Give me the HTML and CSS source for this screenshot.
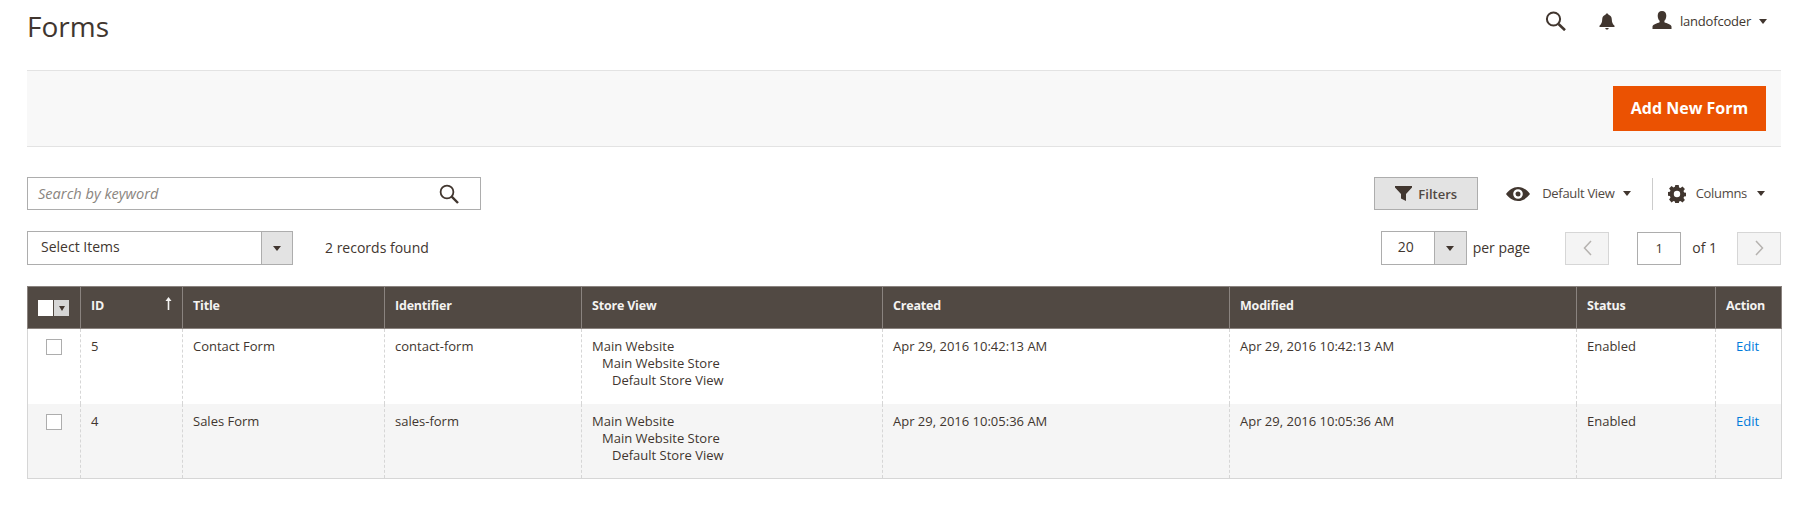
FILE: index.html

```html
<!DOCTYPE html>
<html lang="en">
<head>
  <meta charset="UTF-8" />
  <meta name="viewport" content="width=device-width, initial-scale=1.0"/>
  <title>Forms</title>
  <link rel="stylesheet" href="styles.css">
</head>
<body>
<div class="page">
  <header class="page-header">
    <h1>Forms</h1>
    <div class="header-actions">
      <svg class="icon-search-top" viewBox="0 0 22 20" aria-hidden="true"><circle cx="8.5" cy="8" r="6.6" fill="none" stroke="#41362f" stroke-width="2"/><path d="M13.5 13l6.5 6.2" stroke="#41362f" stroke-width="2.6" fill="none"/></svg>
      <svg class="icon-bell" viewBox="0 0 16 17" aria-hidden="true"><path d="M8 0.5c.9 0 1.4.6 1.5 1.3 2.3.6 3.2 2.5 3.3 4.7.1 2.8.8 4.500 2.700 6.300v1.200H.5v-1.200c1.900-1.800 2.600-3.500 2.700-6.300.1-2.200 1-4.100 3.300-4.700C6.600 1.100 7.100.5 8 .5zM6.300 15h3.400c-.1 1-.8 1.600-1.700 1.600S6.400 16 6.300 15z" fill="#41362f"/></svg>
      <div class="user-menu">
        <svg class="icon-user" viewBox="0 0 20 18" aria-hidden="true"><path d="M10 0c2.800 0 4.300 2 4.300 4.700 0 2.100-.8 4-1.900 5.100v1.400c2.300 1.100 6.700 2 7.100 4.300V18H.5v-2.500c.4-2.300 4.800-3.200 7.100-4.300V9.800C6.500 8.700 5.700 6.800 5.700 4.700 5.700 2 7.200 0 10 0z" fill="#41362f"/></svg>
        <span>landofcoder</span>
        <i class="caret"></i>
      </div>
    </div>
  </header>

  <div class="actions-bar">
    <button class="btn-primary">Add New Form</button>
  </div>

  <div class="toolbar-row toolbar-top">
    <div class="search-box">
      <span class="search-placeholder">Search by keyword</span>
      <svg class="icon-search" viewBox="0 0 20 20" aria-hidden="true"><circle cx="8" cy="8" r="6.400" fill="none" stroke="#41362f" stroke-width="1.800"/><path d="M12.700 12.700l6.300 6.300" stroke="#41362f" stroke-width="2.400" fill="none"/></svg>
    </div>
    <div class="toolbar-right">
      <button class="btn-filters">
        <svg class="icon-filter" viewBox="0 0 17 15" aria-hidden="true"><path d="M0 0h17v1.500l-6 6.500v7l-5-2.500V8L0 1.500z" fill="#41362f"/></svg>
        Filters
      </button>
      <div class="view-select">
        <svg class="icon-eye" viewBox="0 0 24 14" aria-hidden="true"><path fill-rule="evenodd" d="M12 0c5 0 9 3 12 7-3 4-7 7-12 7S3 11 0 7c3-4 7-7 12-7zm0 2.200a4.800 4.800 0 1 0 0 9.600 4.800 4.800 0 0 0 0-9.600zm0 2.300a2.500 2.500 0 1 1 0 5 2.500 2.500 0 0 1 0-5z" fill="#41362f"/></svg>
        <span>Default View</span>
        <i class="caret"></i>
      </div>
      <div class="columns-select">
        <svg class="icon-gear" viewBox="0 0 18 18" aria-hidden="true"><path fill-rule="evenodd" d="M7.300 0h3.400l.4 2.400 1.400.6 2-1.400 2.400 2.400-1.400 2 .6 1.400 2.400.4v3.400l-2.400.4-.6 1.400 1.400 2-2.400 2.400-2-1.400-1.400.6-.4 2.400H7.300l-.4-2.400-1.400-.6-2 1.400L1.100 14.400l1.400-2-.6-1.400L-.5 10.600V7.200l2.400-.4.6-1.400-1.400-2L3.500 1l2 1.400 1.400-.6zM9 5.800a3.200 3.200 0 1 0 0 6.400 3.200 3.200 0 0 0 0-6.400z" fill="#41362f"/></svg>
        <span>Columns</span>
        <i class="caret"></i>
      </div>
    </div>
  </div>

  <div class="toolbar-row toolbar-bottom">
    <div class="toolbar-left">
      <div class="select-box select-items">
        <span class="select-value">Select Items</span>
        <span class="select-arrow"><i class="caret"></i></span>
      </div>
      <span class="records">2 records found</span>
    </div>
    <div class="pager">
      <div class="select-box select-page">
        <span class="select-value">20</span>
        <span class="select-arrow"><i class="caret"></i></span>
      </div>
      <span class="per-page">per page</span>
      <button class="page-btn" aria-label="Previous"><svg viewBox="0 0 9 16" aria-hidden="true"><path d="M8 1L1.500 8 8 15" fill="none" stroke="#b5b2af" stroke-width="1.500"/></svg></button>
      <span class="page-input">1</span>
      <span class="page-total">of 1</span>
      <button class="page-btn" aria-label="Next"><svg viewBox="0 0 9 16" aria-hidden="true"><path d="M1 1l6.500 7L1 15" fill="none" stroke="#b5b2af" stroke-width="1.500"/></svg></button>
    </div>
  </div>

  <table class="grid">
    <colgroup>
      <col class="col-check"><col class="col-id"><col class="col-title"><col class="col-ident">
      <col class="col-store"><col class="col-date"><col class="col-date"><col class="col-status"><col class="col-action">
    </colgroup>
    <thead>
      <tr>
        <th class="check-head"><span class="head-check"><b></b><span><i class="caret"></i></span></span></th>
        <th><span class="sort-head">ID<svg class="icon-sort" viewBox="0 0 7 13" aria-hidden="true"><path d="M3.500 0L6.500 4H4.300v9H2.700V4H.5z" fill="#f4f3f2"/></svg></span></th>
        <th>Title</th>
        <th>Identifier</th>
        <th>Store View</th>
        <th>Created</th>
        <th>Modified</th>
        <th>Status</th>
        <th>Action</th>
      </tr>
    </thead>
    <tbody>
      <tr>
        <td class="check-cell"><span class="row-check"></span></td>
        <td>5</td>
        <td>Contact Form</td>
        <td>contact-form</td>
        <td class="store-cell">Main Website<span class="store-1">Main Website Store</span><span class="store-2">Default Store View</span></td>
        <td>Apr 29, 2016 10:42:13 AM</td>
        <td>Apr 29, 2016 10:42:13 AM</td>
        <td>Enabled</td>
        <td><a href="#">Edit</a></td>
      </tr>
      <tr class="even">
        <td class="check-cell"><span class="row-check"></span></td>
        <td>4</td>
        <td>Sales Form</td>
        <td>sales-form</td>
        <td class="store-cell">Main Website<span class="store-1">Main Website Store</span><span class="store-2">Default Store View</span></td>
        <td>Apr 29, 2016 10:05:36 AM</td>
        <td>Apr 29, 2016 10:05:36 AM</td>
        <td>Enabled</td>
        <td><a href="#">Edit</a></td>
      </tr>
    </tbody>
  </table>
</div>
</body>
</html>
```

FILE: styles.css

```css
* { box-sizing: border-box; }
body { margin: 0; background: #fff; color: #41362f; font-family: "Open Sans", sans-serif; font-size: 13px; }
.page { padding: 0 19px 0 27px; }

.caret {
  display: inline-block;
  width: 0; height: 0;
  border-left: 4px solid transparent;
  border-right: 4px solid transparent;
  border-top: 5px solid #41362f;
}

/* top header */
.page-header {
  height: 70px;
  display: flex;
  justify-content: space-between;
  align-items: flex-start;
}
h1 { margin: 6px 0 0; font-size: 28px; font-weight: 400; line-height: 40px; color: #41362f; }
.header-actions { display: flex; align-items: center; height: 42px; margin-right: 14px; }
.icon-search-top { width: 22px; height: 20px; margin-right: 32px; }
.icon-bell { width: 16px; height: 17px; margin-right: 37px; }
.user-menu { display: flex; align-items: center; font-size: 13px; }
.icon-user { width: 20px; height: 18px; margin-right: 8px; margin-top: -3px; }
.user-menu span { margin-top: -1px; letter-spacing: -0.2px; }
.user-menu .caret { margin-left: 8px; }

/* page actions */
.actions-bar {
  height: 77px;
  background: #f8f8f8;
  border-top: 1px solid #e3e3e3;
  border-bottom: 1px solid #e3e3e3;
  display: flex;
  justify-content: flex-end;
  align-items: center;
  padding-right: 15px;
}
.btn-primary {
  width: 153px; height: 45px;
  border: 0;
  padding: 0 0 2px;
  background: #eb5202;
  color: #fff;
  font: 700 16px "Open Sans", sans-serif;
}

/* toolbars */
.toolbar-row { display: flex; justify-content: space-between; align-items: center; }
.toolbar-top { margin-top: 30px; height: 33px; }
.toolbar-bottom { margin-top: 21px; height: 34px; }
.toolbar-left, .toolbar-right, .pager { display: flex; align-items: center; }

.search-box {
  width: 454px; height: 33px;
  border: 1px solid #adadad;
  display: flex;
  justify-content: space-between;
  align-items: center;
  padding: 0 21px 0 10px;
}
.search-placeholder { font-style: italic; color: #8a8580; font-size: 14.6px; margin-top: -1px; }
.icon-search { width: 20px; height: 20px; }

.btn-filters {
  width: 104px; height: 33px;
  margin-right: 28px;
  background: #e3e3e3;
  border: 1px solid #adadad;
  color: #514943;
  font: 600 13px "Open Sans", sans-serif;
  display: flex;
  align-items: center;
  justify-content: center;
  gap: 6px;
}
.icon-filter { width: 17px; height: 15px; }
.view-select, .columns-select { display: flex; align-items: center; color: #514943; letter-spacing: -0.3px; }
.view-select span, .columns-select span { margin-top: -2px; }
.view-select { padding-right: 21px; height: 32px; border-right: 1px solid #ccc; }
.icon-eye { width: 24px; height: 14px; margin-right: 12px; }
.view-select .caret { margin-left: 8px; }
.columns-select { padding-left: 15px; padding-right: 16px; }
.icon-gear { width: 18px; height: 18px; margin-right: 10px; }
.columns-select .caret { margin-left: 10px; }

.select-box { display: flex; height: 34px; border: 1px solid #adadad; background: #fff; }
.select-value { flex: 1; padding-left: 13px; line-height: 30px; font-size: 14px; }
.select-arrow {
  background: #e3e3e3;
  border-left: 1px solid #adadad;
  display: flex;
  align-items: center;
  justify-content: center;
}
.select-items { width: 266px; }
.select-items .select-arrow { width: 31px; }
.records { margin-left: 32px; font-size: 14px; margin-top: -2px; }

.select-page { width: 86px; }
.select-page .select-value { padding-left: 16px; }
.select-page .select-arrow { width: 32px; }
.per-page { margin-left: 6px; margin-right: 35px; font-size: 14px; margin-top: -2px; }
.page-btn {
  width: 44px; height: 33px;
  padding: 0;
  background: #f4f4f4;
  border: 1px solid #d6d6d6;
  display: flex;
  align-items: center;
  justify-content: center;
}
.page-btn svg { width: 9px; height: 16px; }
.page-input {
  width: 44px; height: 33px;
  margin-left: 28px;
  border: 1px solid #adadad;
  text-align: center;
  line-height: 30px;
}
.page-total { margin-left: 11px; margin-right: 20px; font-size: 14px; margin-top: -2px; }

/* grid */
.grid {
  width: 1754px;
  margin-top: 21px;
  table-layout: fixed;
  border-collapse: collapse;
}
.col-check { width: 53px; }
.col-id { width: 102px; }
.col-title { width: 202px; }
.col-ident { width: 197px; }
.col-store { width: 301px; }
.col-date { width: 347px; }
.col-status { width: 139px; }
.col-action { width: 66px; }

.grid th {
  height: 42px;
  padding: 0 10px 5px;
  background: #514943;
  color: #f4f3f2;
  font-weight: 700;
  font-size: 12.5px;
  letter-spacing: -0.2px;
  text-align: left;
  border: 1px solid #8a837f;
}
.sort-head { display: flex; justify-content: space-between; align-items: center; }
.icon-sort { width: 7px; height: 13px; margin-top: -3px; }
.grid th.check-head { padding: 0 0 0 10px; }
.head-check { display: flex; width: 31px; height: 16px; margin-top: 1px; }
.head-check b { width: 15px; background: #fff; }
.head-check span { flex: 1; background: #d6d6d6; margin-left: 1px; display: flex; align-items: center; justify-content: center; }
.head-check .caret { border-left-width: 3px; border-right-width: 3px; border-top-width: 5px; }

.grid td {
  height: 75px;
  padding: 9px 10px 0;
  vertical-align: top;
  line-height: 17px;
  border-left: 1px dashed #d6d6d6;
  border-right: 1px dashed #d6d6d6;
  color: #41362f;
}
.grid tbody tr:last-child td { border-bottom: 1px solid #d6d6d6; }
.grid tbody td:first-child { border-left: 1px solid #d6d6d6; }
.grid tbody td:last-child { border-right: 1px solid #d6d6d6; }
.grid .even td { background: #f5f5f5; }
.grid td.check-cell { padding: 10px 0 0 18px; }
.row-check { display: block; width: 16px; height: 16px; background: #fff; border: 1px solid #adadad; }
.store-cell span { display: block; }
.store-1 { padding-left: 10px; }
.store-2 { padding-left: 20px; }
.grid a { color: #007bdb; text-decoration: none; display: block; padding-left: 10px; }
```
